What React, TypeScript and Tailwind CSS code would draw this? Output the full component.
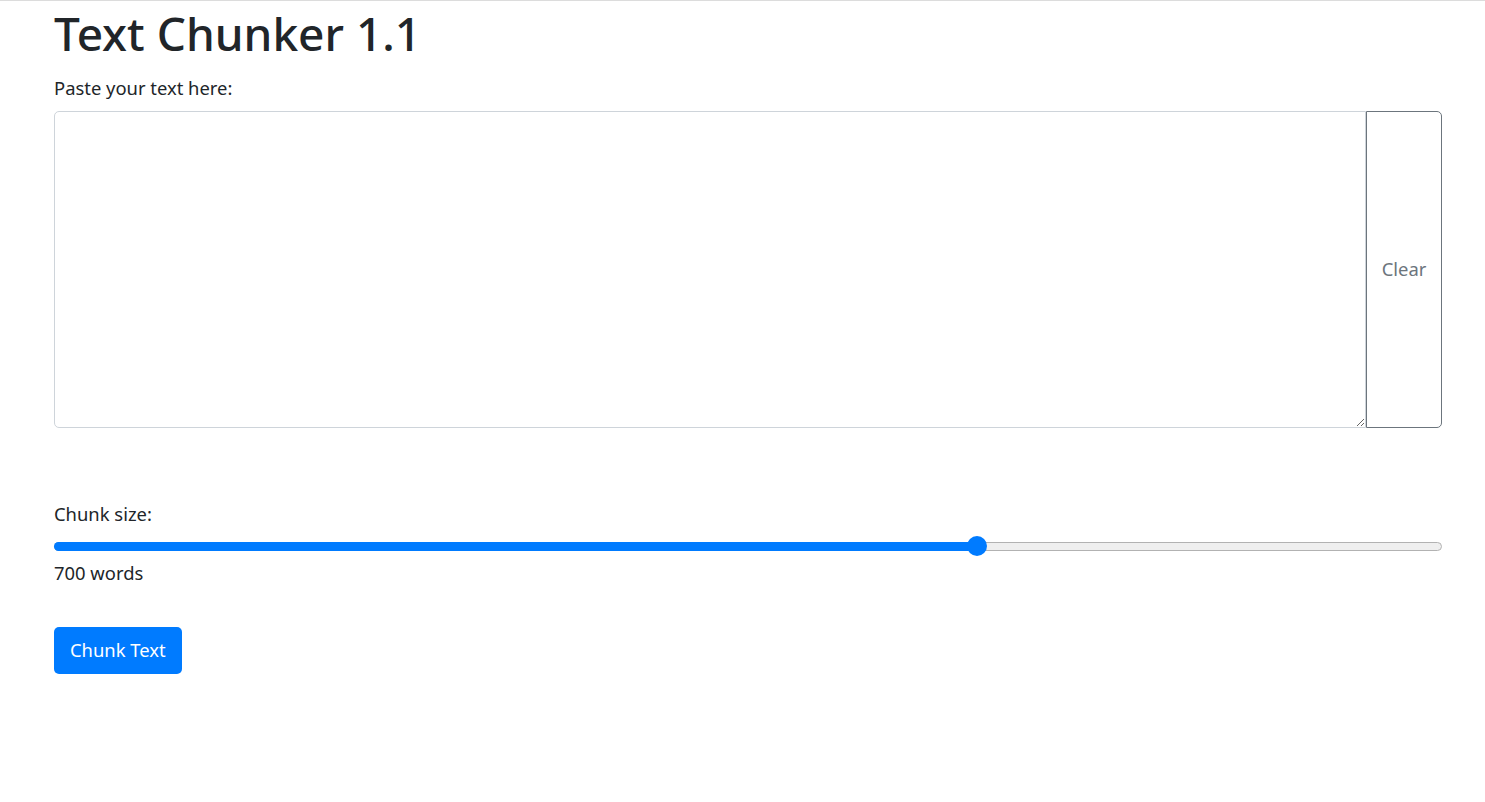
import { useState } from "react";

const font = { fontFamily: '"Segoe UI", "Noto Sans", "Open Sans", sans-serif' };

function Slider({ value, min, max }: { value: number; min: number; max: number }) {
  const pct = ((value - min) / (max - min)) * 100;
  return (
    <div className="relative h-5 flex items-center">
      <div className="w-full h-[9px] rounded-full bg-[#efefef] border border-[#b2b2b2]" />
      <div className="absolute left-0 h-[9px] rounded-full bg-[#007bff]" style={{ width: `${pct}%` }} />
      <div
        className="absolute w-5 h-5 -ml-[10px] rounded-full bg-[#007bff]"
        style={{ left: `${pct}%` }}
      />
    </div>
  );
}

export default function App() {
  const [text, setText] = useState("");

  return (
    <div className="min-h-[802px] bg-white border-t border-[#dcdcdc] text-[#212529]" style={font}>
      <div className="ml-[54px] mr-[43px] pt-[5px]">
        <h1 className="text-[46px] leading-[55px] font-medium mb-[13px]">Text Chunker 1.1</h1>
        <label className="block text-[18.4px] leading-[27.6px] mb-[9px]">Paste your text here:</label>
        <div className="flex h-[317px]">
          <textarea
            value={text}
            onChange={(e) => setText(e.target.value)}
            className="flex-1 border border-[#ced4da] rounded-l-[5px] px-3 py-1.5 outline-none resize-y"
          />
          <button className="w-[76px] border border-[#6c757d] rounded-r-[5px] text-[#6c757d] text-[18.4px]">
            Clear
          </button>
        </div>

        <label className="block text-[18.4px] leading-[27.6px] mt-[72px]">Chunk size:</label>
        <div className="mt-[9px]">
          <Slider value={700} min={0} max={1053} />
        </div>
        <p className="text-[18.4px] leading-[27.6px] mt-[3px]">700 words</p>

        <button className="mt-[40px] h-[47px] px-4 rounded-[5px] bg-[#007bff] text-white text-[18.4px]">
          Chunk Text
        </button>
      </div>
    </div>
  );
}
